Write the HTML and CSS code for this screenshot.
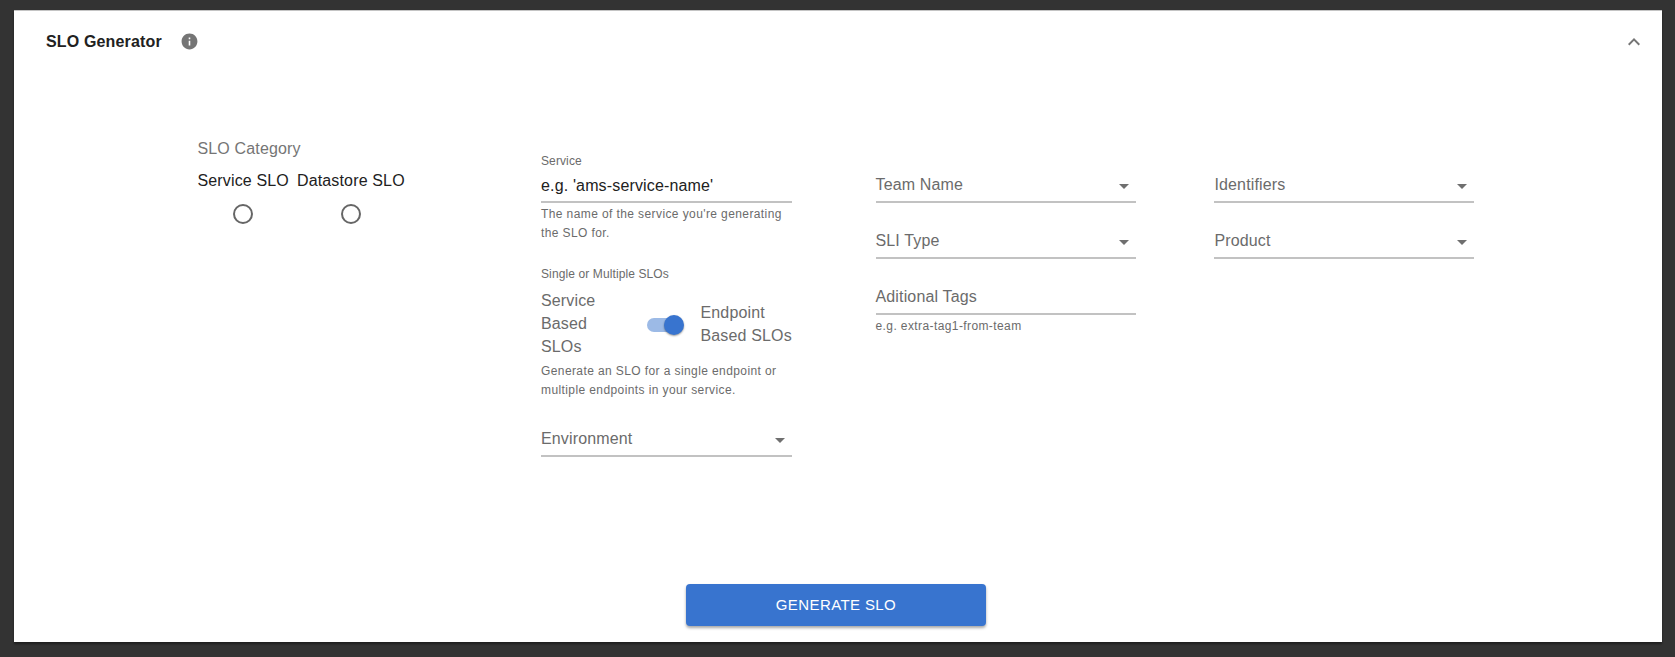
FILE: index.html
```html
<!DOCTYPE html>
<html lang="en">
<head>
<meta charset="utf-8">
<title>SLO Generator</title>
<link rel="stylesheet" href="styles.css">
</head>
<body>
<main class="card">
  <header class="card-header">
    <h1 class="title">SLO Generator</h1>
    <svg class="info" viewBox="0 0 24 24"><path d="M12 2C6.48 2 2 6.48 2 12s4.480 10 10 10 10-4.480 10-10S17.520 2 12 2zm1 15h-2v-6h2v6zm0-8h-2V7h2v2z"/></svg>
    <svg class="chevron" viewBox="0 0 24 24"><path d="M12 8l-6 6 1.410 1.410L12 10.830l4.590 4.580L18 14z"/></svg>
  </header>
  <form class="form">
    <section class="category">
      <div class="legend"><span class="t">SLO Category</span></div>
      <div class="radios">
        <label class="radio"><span class="t">Service SLO</span><i class="dot"></i></label>
        <label class="radio"><span class="t">Datastore SLO</span><i class="dot"></i></label>
      </div>
    </section>
    <section class="column service-column">
      <div class="label"><span class="t">Service</span></div>
      <div class="field value"><span class="t">e.g. 'ams-service-name'</span></div>
      <p class="helper">The name of the service you're generating<br>the SLO for.</p>
      <div class="label switch-label"><span class="t">Single or Multiple SLOs</span></div>
      <div class="switch-row">
        <span class="switch-left">Service<br>Based<br>SLOs</span>
        <span class="switch"><i class="thumb"></i></span>
        <span class="switch-right">Endpoint<br>Based SLOs</span>
      </div>
      <p class="helper switch-helper">Generate an SLO for a single endpoint or<br>multiple endpoints in your service.</p>
      <div class="field environment"><span class="t">Environment</span><i class="arrow"></i></div>
    </section>
    <section class="column fields">
      <div class="field"><span class="t">Team Name</span><i class="arrow"></i></div>
      <div class="field"><span class="t">SLI Type</span><i class="arrow"></i></div>
      <div class="field"><span class="t">Aditional Tags</span></div>
      <p class="helper">e.g. extra-tag1-from-team</p>
    </section>
    <section class="column fields">
      <div class="field"><span class="t">Identifiers</span><i class="arrow"></i></div>
      <div class="field"><span class="t">Product</span><i class="arrow"></i></div>
    </section>
  </form>
  <footer class="footer"><button class="generate" type="button">GENERATE SLO</button></footer>
</main>
</body>
</html>
```
FILE: styles.css
```css
* { box-sizing: border-box; }
body {
  margin: 0;
  height: 657px;
  padding: 10px 13px 15px 14px;
  background: #333;
  color: #212121;
  font: 16px/23px "Liberation Sans", Arial, sans-serif;
  letter-spacing: 0.15px;
  overflow: hidden;
}
.card {
  display: flex;
  flex-direction: column;
  height: 632px;
  background: #fff;
  border-top: 1px solid #c4c4c4;
  box-shadow: 0 2px 2px rgba(0, 0, 0, 0.4);
}
.card-header {
  display: flex;
  align-items: center;
  height: 60px;
  padding: 0 16px 0 32px;
}
.title { margin: 0; font-size: 16px; line-height: 23px; letter-spacing: 0.15px; }
.info { width: 19px; height: 19px; margin: 1px 0 0 18.5px; fill: #757575; }
.chevron { width: 24px; height: 24px; margin: 1px 0 0 auto; fill: #757575; }
.form {
  display: grid;
  grid-template-columns: 343.5px 251px 260px 260px;
  flex: 1;
  padding: 62px 0 0 183.5px;
}
.form > .fields { margin-left: 83.5px; margin-right: -83.5px; }
.form > .fields + .fields { margin-left: 162.4px; margin-right: -162.4px; }
.category { padding-top: 4px; }
.legend { height: 32px; color: #757575; }
.radios { display: flex; gap: 8px; }
.radio { display: flex; flex-direction: column; align-items: center; gap: 12px; }
.dot { width: 20px; height: 20px; border: 2px solid #666; border-radius: 50%; }
.column { color: #6b6b6b; }
.label { height: 41px; padding-top: 19px; font-size: 12px; line-height: 18px; letter-spacing: 0.11px; }
.switch-label { height: 46px; padding-top: 22px; }
.field {
  display: flex;
  align-items: center;
  justify-content: space-between;
  height: 29px;
  border-bottom: 2px solid #c2c2c2;
  padding-bottom: 7px;
}
.field.value { padding-bottom: 5px; color: #212121; }
.fields { padding-top: 41px; }
.fields .field + .field { margin-top: 27px; }
.arrow {
  width: 0;
  height: 0;
  margin: 5px 7px 0 0;
  border: 5px solid transparent;
  border-top-color: #6f6f6f;
  border-bottom: 0;
}
.helper { margin: 2px 0 0; font-size: 12px; line-height: 19px; letter-spacing: 0.4px; white-space: nowrap; }
.switch-row { display: flex; align-items: center; }
.switch-left { width: 106px; }
.switch {
  display: flex;
  align-items: center;
  justify-content: flex-end;
  width: 36px;
  height: 14px;
  margin-top: 2px;
  border-radius: 7px;
  background: #9cbae6;
}
.thumb {
  width: 20px;
  height: 20px;
  margin-right: -1px;
  border-radius: 50%;
  background: #3874cf;
  box-shadow: 0 1px 2px rgba(0, 0, 0, 0.4);
}
.switch-right { margin-left: 17.5px; white-space: nowrap; }
.switch-helper { margin-top: 4px; }
.environment { margin-top: 28px; }
.footer { display: flex; justify-content: center; padding: 0 4px 16px 0; }
.generate {
  width: 300px;
  height: 42px;
  border: 0;
  border-radius: 4px;
  background: #3874cf;
  color: #fff;
  font: 15px/26px "Liberation Sans", Arial, sans-serif;
  letter-spacing: 0.4px;
  box-shadow: 0 2px 3px rgba(0, 0, 0, 0.35);
}
```
